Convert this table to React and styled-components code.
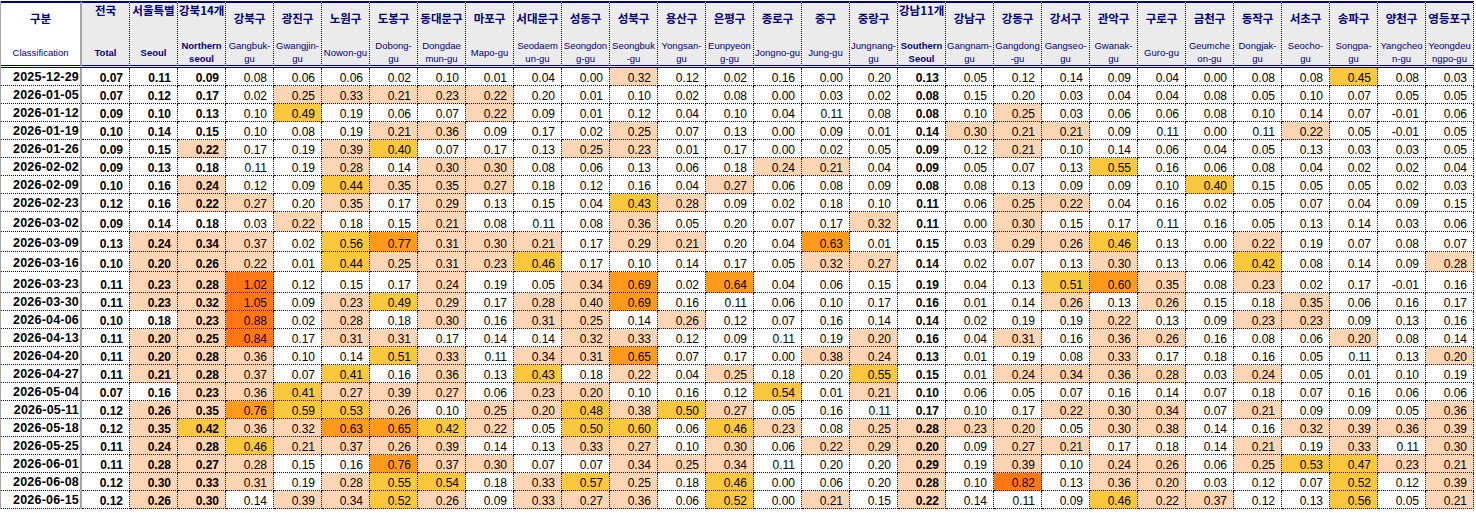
import React from 'react'
import styled, { createGlobalStyle } from 'styled-components'

const NAVY = '#000080'
const GRID_GRAY = '#a6a6a6'
const FILLS = { p: '#fcd5b4', y: '#fac83c', o: '#ff9b1a', d: '#ff7814' }

const GlobalStyle = createGlobalStyle`
  body {
    margin: 0;
    background: #fff;
  }
`

// 헤더: 한글 / 영문(줄바꿈 위치는 원본 엑셀 그대로, 좁은 칸에서 잘린 한글도 보이는 만큼만)
const heads = [
    { ko: '전국', en: ['Total'], agg: true },
    { ko: '서울특별', en: ['Seoul'], agg: true },
    { ko: '강북14개', en: ['Northern', 'seoul'], agg: true },
    { ko: '강북구', en: ['Gangbuk-', 'gu'] },
    { ko: '광진구', en: ['Gwangjin-', 'gu'] },
    { ko: '노원구', en: ['Nowon-gu'] },
    { ko: '도봉구', en: ['Dobong-', 'gu'] },
    { ko: '동대문구', en: ['Dongdae', 'mun-gu'] },
    { ko: '마포구', en: ['Mapo-gu'] },
    { ko: '서대문구', en: ['Seodaem', 'un-gu'] },
    { ko: '성동구', en: ['Seongdon', 'g-gu'] },
    { ko: '성북구', en: ['Seongbuk', '-gu'] },
    { ko: '용산구', en: ['Yongsan-', 'gu'] },
    { ko: '은평구', en: ['Eunpyeon', 'g-gu'] },
    { ko: '종로구', en: ['Jongno-gu'] },
    { ko: '중구', en: ['Jung-gu'] },
    { ko: '중랑구', en: ['Jungnang-', 'gu'] },
    { ko: '강남11개', en: ['Southern', 'Seoul'], agg: true },
    { ko: '강남구', en: ['Gangnam-', 'gu'] },
    { ko: '강동구', en: ['Gangdong', '-gu'] },
    { ko: '강서구', en: ['Gangseo-', 'gu'] },
    { ko: '관악구', en: ['Gwanak-', 'gu'] },
    { ko: '구로구', en: ['Guro-gu'] },
    { ko: '금천구', en: ['Geumche', 'on-gu'] },
    { ko: '동작구', en: ['Dongjak-', 'gu'] },
    { ko: '서초구', en: ['Seocho-', 'gu'] },
    { ko: '송파구', en: ['Songpa-', 'gu'] },
    { ko: '양천구', en: ['Yangcheo', 'n-gu'] },
    { ko: '영등포구', en: ['Yeongdeu', 'ngpo-gu'] },
]

// 값 뒤 글자 = 셀 색 (p 0.2~, y 0.4~, o 0.6~, d 0.8~)
const rows = [
    ['2025-12-29', '0.07 0.11 0.09 0.08 0.06 0.06 0.02 0.10 0.01 0.04 0.00 0.32p 0.12 0.02 0.16 0.00 0.20 0.13 0.05 0.12 0.14 0.09 0.04 0.00 0.08 0.08 0.45y 0.08 0.03'],
    ['2026-01-05', '0.07 0.12 0.17 0.02 0.25p 0.33p 0.21p 0.23p 0.22p 0.20 0.01 0.10 0.02 0.08 0.00 0.03 0.02 0.08 0.15 0.20 0.03 0.04 0.04 0.08 0.05 0.10 0.07 0.05 0.05'],
    ['2026-01-12', '0.09 0.10 0.13 0.10 0.49y 0.19 0.06 0.07 0.22p 0.09 0.01 0.12 0.04 0.10 0.04 0.11 0.08 0.08 0.10 0.25p 0.03 0.06 0.06 0.08 0.10 0.14 0.07 -0.01 0.06'],
    ['2026-01-19', '0.10 0.14 0.15 0.10 0.08 0.19 0.21p 0.36p 0.09 0.17 0.02 0.25p 0.07 0.13 0.00 0.09 0.01 0.14 0.30p 0.21p 0.21p 0.09 0.11 0.00 0.11 0.22p 0.05 -0.01 0.05'],
    ['2026-01-26', '0.09 0.15 0.22p 0.17 0.19 0.39p 0.40y 0.07 0.17 0.13 0.25p 0.23p 0.01 0.17 0.00 0.02 0.05 0.09 0.12 0.21p 0.10 0.14 0.06 0.04 0.05 0.13 0.03 0.03 0.05'],
    ['2026-02-02', '0.09 0.13 0.18 0.11 0.19 0.28p 0.14 0.30p 0.30p 0.08 0.06 0.13 0.06 0.18 0.24p 0.21p 0.04 0.09 0.05 0.07 0.13 0.55y 0.16 0.06 0.08 0.04 0.02 0.02 0.04'],
    ['2026-02-09', '0.10 0.16 0.24p 0.12 0.09 0.44y 0.35p 0.35p 0.27p 0.18 0.12 0.16 0.04 0.27p 0.06 0.08 0.09 0.08 0.08 0.13 0.09 0.09 0.10 0.40y 0.15 0.05 0.05 0.02 0.03'],
    ['2026-02-23', '0.12 0.16 0.22p 0.27p 0.20 0.35p 0.17 0.29p 0.13 0.15 0.04 0.43y 0.28p 0.09 0.02 0.18 0.10 0.11 0.06 0.25p 0.22p 0.04 0.16 0.02 0.05 0.07 0.04 0.09 0.15'],
    ['2026-03-02', '0.09 0.14 0.18 0.03 0.22p 0.18 0.15 0.21p 0.08 0.11 0.08 0.36p 0.05 0.20 0.07 0.17 0.32p 0.11 0.00 0.30p 0.15 0.17 0.11 0.16 0.05 0.13 0.14 0.03 0.06'],
    ['2026-03-09', '0.13 0.24p 0.34p 0.37p 0.02 0.56y 0.77o 0.31p 0.30p 0.21p 0.17 0.29p 0.21p 0.20 0.04 0.63o 0.01 0.15 0.03 0.29p 0.26p 0.46y 0.13 0.00 0.22p 0.19 0.07 0.08 0.07'],
    ['2026-03-16', '0.10 0.20p 0.26p 0.22p 0.01 0.44y 0.25p 0.31p 0.23p 0.46y 0.17 0.10 0.14 0.17 0.05 0.32p 0.27p 0.14 0.02 0.07 0.13 0.30p 0.13 0.06 0.42y 0.08 0.14 0.09 0.28p'],
    ['2026-03-23', '0.11 0.23p 0.28p 1.02d 0.12 0.15 0.17 0.24p 0.19 0.05 0.34p 0.69o 0.02 0.64o 0.04 0.06 0.15 0.19 0.04 0.13 0.51y 0.60o 0.35p 0.08 0.23p 0.02 0.17 -0.01 0.16'],
    ['2026-03-30', '0.11 0.23p 0.32p 1.05d 0.09 0.23p 0.49y 0.29p 0.17 0.28p 0.40p 0.69o 0.16 0.11 0.06 0.10 0.17 0.16 0.01 0.14 0.26p 0.13 0.26p 0.15 0.18 0.35p 0.06 0.16 0.17'],
    ['2026-04-06', '0.10 0.18 0.23p 0.88d 0.02 0.28p 0.18 0.30p 0.16 0.31p 0.25p 0.14 0.26p 0.12 0.07 0.16 0.14 0.14 0.02 0.19 0.19 0.22p 0.13 0.09 0.23p 0.23p 0.09 0.13 0.16'],
    ['2026-04-13', '0.11 0.20p 0.25p 0.84d 0.17 0.31p 0.31p 0.17 0.14 0.14 0.32p 0.33p 0.12 0.09 0.11 0.19 0.20p 0.16 0.04 0.31p 0.16 0.36p 0.26p 0.16 0.08 0.06 0.20p 0.08 0.14'],
    ['2026-04-20', '0.11 0.20p 0.28p 0.36p 0.10 0.14 0.51y 0.33p 0.11 0.34p 0.31p 0.65o 0.07 0.17 0.00 0.38p 0.24p 0.13 0.01 0.19 0.08 0.33p 0.17 0.18 0.16 0.05 0.11 0.13 0.20p'],
    ['2026-04-27', '0.11 0.21p 0.28p 0.37p 0.07 0.41y 0.16 0.36p 0.13 0.43y 0.18 0.22p 0.04 0.25p 0.18 0.20 0.55y 0.15 0.01 0.24p 0.34p 0.36p 0.28p 0.03 0.24p 0.05 0.01 0.10 0.19'],
    ['2026-05-04', '0.07 0.16 0.23p 0.36p 0.41y 0.27p 0.39p 0.27p 0.06 0.23p 0.20p 0.10 0.16 0.12 0.54y 0.01 0.21p 0.10 0.06 0.05 0.07 0.16 0.14 0.07 0.18 0.07 0.16 0.06 0.06'],
    ['2026-05-11', '0.12 0.26p 0.35p 0.76o 0.59y 0.53y 0.26p 0.10 0.25p 0.20p 0.48y 0.38p 0.50y 0.27p 0.05 0.16 0.11 0.17 0.10 0.17 0.22p 0.30p 0.34p 0.07 0.21p 0.09 0.09 0.05 0.36p'],
    ['2026-05-18', '0.12 0.35p 0.42y 0.36p 0.32p 0.63o 0.65o 0.42y 0.22p 0.05 0.50y 0.60y 0.06 0.46y 0.23p 0.08 0.25p 0.28p 0.23p 0.20p 0.05 0.30p 0.38p 0.14 0.16 0.32p 0.39p 0.36p 0.39p'],
    ['2026-05-25', '0.11 0.24p 0.28p 0.46y 0.21p 0.37p 0.26p 0.39p 0.14 0.13 0.33p 0.27p 0.10 0.30p 0.06 0.22p 0.29p 0.20p 0.09 0.27p 0.21p 0.17 0.18 0.14 0.21p 0.19 0.33p 0.11 0.30p'],
    ['2026-06-01', '0.11 0.28p 0.27p 0.28p 0.15 0.16 0.76o 0.37p 0.30p 0.07 0.07 0.34p 0.25p 0.34p 0.11 0.20 0.20 0.29p 0.19 0.39p 0.10 0.24p 0.26p 0.06 0.25p 0.53y 0.47y 0.23p 0.21p'],
    ['2026-06-08', '0.12 0.30p 0.33p 0.31p 0.19 0.28p 0.55y 0.54y 0.18 0.33p 0.57y 0.25p 0.18 0.46y 0.00 0.06 0.20 0.28p 0.10 0.82d 0.13 0.36p 0.20p 0.03 0.12 0.07 0.52y 0.12 0.39p'],
    ['2026-06-15', '0.12 0.26p 0.30p 0.14 0.39p 0.34p 0.52y 0.26p 0.09 0.33p 0.27p 0.36p 0.06 0.52y 0.00 0.21p 0.15 0.22p 0.14 0.11 0.09 0.46y 0.22p 0.37p 0.12 0.13 0.56y 0.05 0.21p'],
]

const Sheet = styled.div`
    display: grid;
    grid-template-columns: 81px repeat(29, 48px);
    grid-template-rows: 67px repeat(8, 18px) 20px 20px 20px 21px repeat(12, 18px);
    width: max-content;
    margin-top: 1px;
    border-left: 1px solid ${GRID_GRAY};
`
const HeadCell = styled.div`
    box-sizing: border-box;
    display: flex;
    flex-direction: column;
    min-width: 0;
    background: ${props => props.$corner ? '#fff' : '#ebebeb'};
    border-top: 2px solid ${NAVY};
    border-bottom: 3px double ${NAVY};
    border-right: ${props => props.$corner ? `2px solid ${GRID_GRAY}` : `1px dotted ${NAVY}`};
`
const KoLabel = styled.div`
    height: 36px;
    box-sizing: border-box;
    padding: ${props => props.$agg ? '0 1px' : '8px 1px 0'};
    font: 700 11.5px/14px 'Noto Sans CJK KR', sans-serif;
    color: ${NAVY};
    text-align: center;
    white-space: nowrap;
`
const EnLabel = styled.div`
    flex: 1;
    display: flex;
    flex-direction: column;
    justify-content: center;
    align-items: center;
    font: ${props => props.$agg ? 700 : 400} 9.5px/13px 'Liberation Sans', Arial, sans-serif;
    color: ${NAVY};
    white-space: nowrap;
`
const DateCell = styled.div`
    box-sizing: border-box;
    display: flex;
    align-items: flex-end;
    justify-content: flex-end;
    padding-right: 1px;
    border-right: 2px solid ${GRID_GRAY};
    border-bottom: 1px dotted ${NAVY};
    font: 700 12.5px/15px 'Liberation Sans', Arial, sans-serif;
    letter-spacing: 0.2px;
    color: #000;
`
const NumCell = styled.div`
    box-sizing: border-box;
    display: flex;
    align-items: flex-end;
    justify-content: flex-end;
    padding-right: 6px;
    background: ${props => FILLS[props.$level] || '#fff'};
    border-right: 1px dotted ${NAVY};
    border-bottom: 1px dotted ${NAVY};
    font: ${props => props.$bold ? 700 : 400} 12px/14px 'Liberation Sans', Arial, sans-serif;
    color: #000;
`

const parseCell = raw => {
    const last = raw.slice(-1)
    return FILLS[last] ? { value: raw.slice(0, -1), level: last } : { value: raw, level: null }
}

export default function App() {
    return (
        <>
            <GlobalStyle />
            <Sheet>
                <HeadCell $corner>
                    <KoLabel>구분</KoLabel>
                    <EnLabel>Classification</EnLabel>
                </HeadCell>
                {heads.map(h => (
                    <HeadCell key={h.ko}>
                        <KoLabel $agg={h.agg}>{h.ko}</KoLabel>
                        <EnLabel $agg={h.agg}>
                            {h.en.map(line => <span key={line}>{line}</span>)}
                        </EnLabel>
                    </HeadCell>
                ))}
                {rows.map(([date, values]) => (
                    <React.Fragment key={date}>
                        <DateCell>{date}</DateCell>
                        {values.split(' ').map((raw, i) => {
                            const { value, level } = parseCell(raw)
                            return (
                                <NumCell key={i} $level={level} $bold={heads[i].agg}>
                                    {value}
                                </NumCell>
                            )
                        })}
                    </React.Fragment>
                ))}
            </Sheet>
        </>
    )
}
